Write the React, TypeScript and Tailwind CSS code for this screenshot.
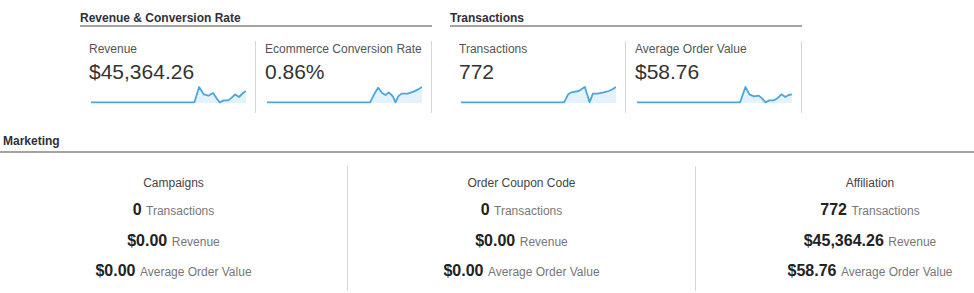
import React from "react";

type Metric = { label: string; value: string; points: string; vb: string };

const GROUPS: { title: string; metrics: Metric[] }[] = [
  {
    title: "Revenue & Conversion Rate",
    metrics: [
      {
        label: "Revenue",
        value: "$45,364.26",
        vb: "17 10 466 63",
        points:
          "17,68 328,68 342,22 356,44 370,48 384,40 396,58 404,68 416,62 430,62 440,54 450,44 462,52 474,40 483,34",
      },
      {
        label: "Ecommerce Conversion Rate",
        vb: "20 10 463 63",
        value: "0.86%",
        points:
          "20,68 328,68 340,44 352,24 364,40 374,46 384,38 396,50 404,68 412,50 422,42 440,42 458,36 470,30 483,22",
      },
    ],
  },
  {
    title: "Transactions",
    metrics: [
      {
        label: "Transactions",
        value: "772",
        vb: "20 10 463 63",
        points:
          "20,68 328,68 340,44 350,38 372,34 384,26 390,22 404,68 414,42 428,42 446,38 462,34 474,28 483,22",
      },
      {
        label: "Average Order Value",
        value: "$58.76",
        vb: "20 10 466 63",
        points:
          "20,68 330,68 346,22 358,44 372,50 386,48 396,56 406,68 418,62 432,62 442,56 454,44 466,52 476,46 486,44",
      },
    ],
  },
];

const MARKETING = [
  { title: "Campaigns", tx: "0", rev: "$0.00", aov: "$0.00" },
  { title: "Order Coupon Code", tx: "0", rev: "$0.00", aov: "$0.00" },
  { title: "Affiliation", tx: "772", rev: "$45,364.26", aov: "$58.76" },
];

function Sparkline({ points, vb }: { points: string; vb: string }) {
  const parts = points.split(" ");
  const first = parts[0].split(",")[0];
  const last = parts[parts.length - 1].split(",")[0];
  const area = `${first},70 ${points} ${last},70`;
  return (
    <svg
      width="155"
      height="21"
      viewBox={vb}
      preserveAspectRatio="none"
      className="block ml-[2px]"
    >
      <polygon points={area} fill="#e4f2fb" />
      <polyline
        points={points}
        fill="none"
        stroke="#4ba6da"
        strokeWidth="1.8"
        strokeLinejoin="round"
        vectorEffect="non-scaling-stroke"
      />
    </svg>
  );
}

export default function App() {
  return (
    <div
      className="w-[974px] h-[293px] overflow-hidden bg-white"
      style={{ fontFamily: '"Liberation Sans", Arial, sans-serif' }}
    >
      <div className="w-[1044px]">
        {/* top scorecards */}
        <div className="flex gap-[18px] pl-[80px] pt-[11px]">
          {GROUPS.map((g) => (
            <div key={g.title} className="w-[352px]">
              <div className="text-[12px] leading-[14px] font-bold text-[#2f2f3a] border-b-2 border-[#a3a3a3]">
                {g.title}
              </div>
              <div className="flex mt-[14px]">
                {g.metrics.map((m) => (
                  <div
                    key={m.label}
                    className="w-[176px] border-r border-[#d6d6d6] pl-[9px] pt-[1px] pb-[9px]"
                  >
                    <div className="text-[12px] leading-[14px] text-[#555]">{m.label}</div>
                    <div className="mt-[5px] text-[21px] leading-[22px] text-[#333]">{m.value}</div>
                    <Sparkline points={m.points} vb={m.vb} />
                  </div>
                ))}
              </div>
            </div>
          ))}
        </div>

        {/* marketing */}
        <div className="mt-[21px] pl-[3px] pb-[3px] text-[12px] leading-[14px] font-bold text-[#2f2f3a] border-b-2 border-[#a3a3a3]">
          Marketing
        </div>
        <div className="grid grid-cols-3 mt-[13px]">
          {MARKETING.map((c, i) => (
            <div
              key={c.title}
              className={`flex flex-col items-center pt-[10px] pb-[10px] ${
                i < 2 ? "border-r border-[#d6d6d6]" : ""
              }`}
            >
              <div className="text-[12px] leading-[14px] text-[#444]">{c.title}</div>
              <div className="mt-[11px] leading-[18px]">
                <span className="text-[16px] font-bold text-[#222]">{c.tx}</span>{" "}
                <span className="text-[12px] text-[#777]">Transactions</span>
              </div>
              <div className="mt-[12px] leading-[18px]">
                <span className="text-[16px] font-bold text-[#222]">{c.rev}</span>{" "}
                <span className="text-[12px] text-[#777]">Revenue</span>
              </div>
              <div className="mt-[11px] leading-[18px]">
                <span className="text-[16px] font-bold text-[#222]">{c.aov}</span>{" "}
                <span className="text-[12px] text-[#777]">Average Order Value</span>
              </div>
            </div>
          ))}
        </div>
      </div>
    </div>
  );
}
